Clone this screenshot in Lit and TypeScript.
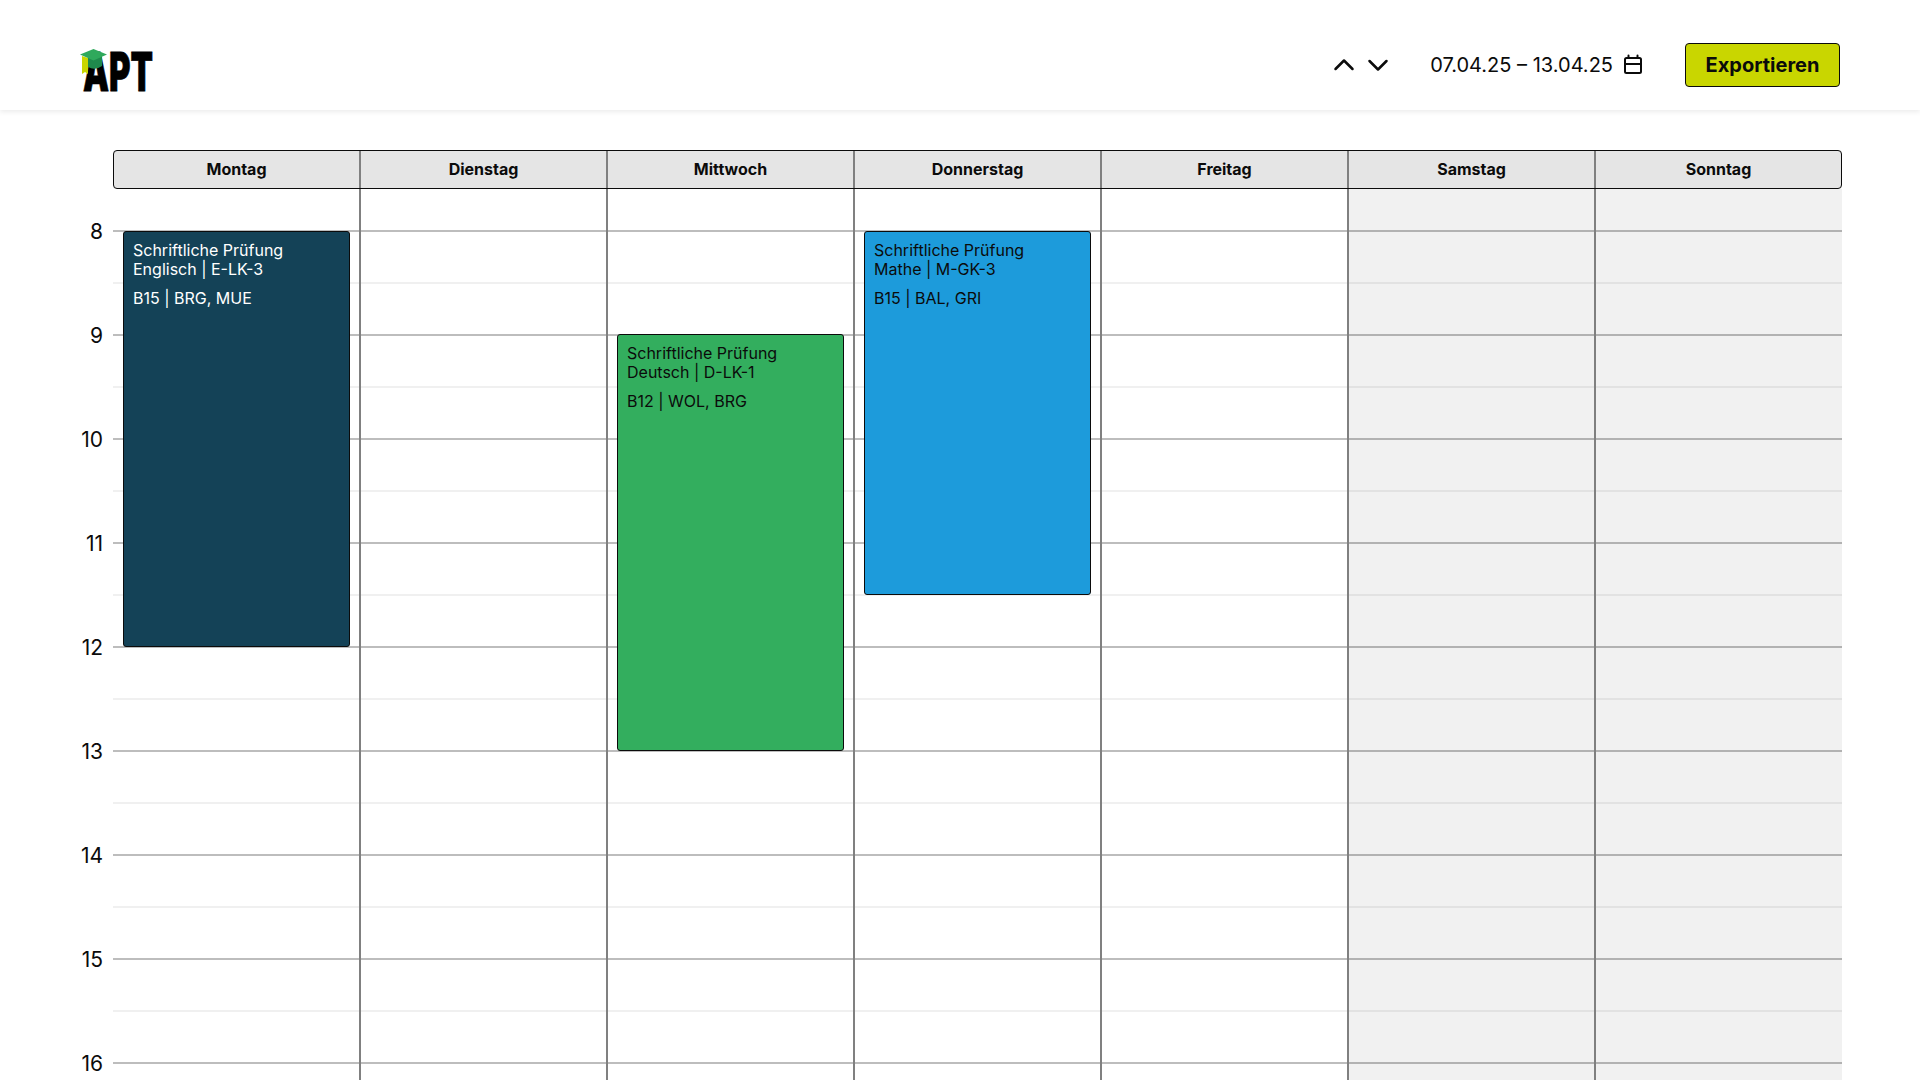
import { LitElement, html, css } from "lit";
import { customElement } from "lit/decorators.js";

const days = ["Montag", "Dienstag", "Mittwoch", "Donnerstag", "Freitag", "Samstag", "Sonntag"];
const hours = [8, 9, 10, 11, 12, 13, 14, 15, 16];

interface Ev { day: number; top: number; height: number; title: string; sub: string; room: string; bg: string; fg: string; }
const events: Ev[] = [
  { day: 0, top: 42, height: 416, title: "Schriftliche Prüfung", sub: "Englisch | E-LK-3", room: "B15 | BRG, MUE", bg: "#144257", fg: "#ffffff" },
  { day: 2, top: 145, height: 417, title: "Schriftliche Prüfung", sub: "Deutsch | D-LK-1", room: "B12 | WOL, BRG", bg: "#33ae5e", fg: "#0b0b0b" },
  { day: 3, top: 42, height: 364, title: "Schriftliche Prüfung", sub: "Mathe | M-GK-3", room: "B15 | BAL, GRI", bg: "#1d9bdb", fg: "#0b0b0b" },
];

@customElement("app-root")
export class AppRoot extends LitElement {
  static styles = css`
    :host { display: block; height: 1080px; overflow: hidden; background: #fff; font-family: Inter, "Liberation Sans", sans-serif; color: #0b0b0b; }
    .top { height: 110px; box-sizing: border-box; display: flex; align-items: center; padding: 20px 80px 0 80px; box-shadow: 0 2px 5px rgba(0,0,0,.08); position: relative; z-index: 2; background: #fff; }
    .logo { display: block; margin-top: 10px; overflow: visible; }
    .logo text { font-family: Inter, "Liberation Sans", sans-serif; font-weight: 900; font-size: 54px; }
    .spacer { flex: 1; }
    .nav { display: flex; gap: 10.5px; margin-right: 40px; }
    .nav svg { display: block; }
    .date { font-size: 20px; margin-right: 8px; }
    .cal { display: block; margin-right: 40px; }
    .btn { box-sizing: border-box; width: 155px; height: 44px; border: 1px solid #0b0b0b; border-radius: 4px; background: #c9d600; font: 700 20px Inter, sans-serif; color: #0b0b0b; padding: 0; }
    .main { padding: 40px 78px 0 0; display: grid; grid-template-columns: 113px 1fr; }
    .heads { grid-column: 2; position: relative; display: grid; grid-template-columns: repeat(7, 1fr); height: 39px; border-radius: 4px; background: #e5e5e5; }
    .heads::after { content: ""; position: absolute; inset: 0; border: 1.5px solid #0b0b0b; border-radius: 4px; }
    .head { position: relative; display: flex; align-items: center; justify-content: center; padding-bottom: 1px; font-size: 16px; font-weight: 700; }
    .head + .head::before, .col + .col::before { content: ""; position: absolute; left: -1px; top: 0; bottom: 0; width: 2px; background: #808080; }
    .gutter { padding-top: 43px; }
    .label { height: 104px; font-size: 21px; text-align: right; padding-right: 10px; line-height: 0; }
    .body { position: relative; padding-top: 41px; }
    .row { height: 104px; box-sizing: border-box; border-top: 2px solid #bdbdbd; position: relative; }
    .row::after { content: ""; position: absolute; left: 0; right: 0; top: 50px; border-top: 2px solid #f0f0f0; }
    .cols { position: absolute; inset: 0; display: grid; grid-template-columns: repeat(7, 1fr); }
    .col { position: relative; }
    .col.we { background: rgba(0,0,0,.055); }
    .ev { position: absolute; left: 10px; right: 10px; box-sizing: border-box; border: 1px solid #0b0b0b; border-radius: 3px; padding: 9px 9px; font-size: 16px; line-height: 19px; }
    .room { margin-top: 10px; }
  `;

  render() {
    return html`
      <div class="top">
        <svg class="logo" width="76" height="46" viewBox="0 0 76 46">
          <text x="3" y="44" textLength="70" lengthAdjust="spacingAndGlyphs" fill="#000" stroke="#000" stroke-width="0.8">APT</text>
          <path d="M8 9 H22 V19 Q15 24 8 20 Z" fill="#1f8a4c"/>
          <path d="M2 9 L8 11 V22 V27 L5 25 L2 27 Z" fill="#c9d600"/>
          <path d="M0 7.5 L13.5 2 L27 7.5 L13.5 13.5 Z" fill="#2fa95c"/>
        </svg>
        <div class="spacer"></div>
        <div class="nav">
          <svg width="24" height="24" viewBox="0 0 24 24" fill="none" stroke="#0b0b0b" stroke-width="2.5" stroke-linecap="round" stroke-linejoin="round"><path d="M3.5 16 L12 7.5 L20.5 16"/></svg>
          <svg width="24" height="24" viewBox="0 0 24 24" fill="none" stroke="#0b0b0b" stroke-width="2.5" stroke-linecap="round" stroke-linejoin="round"><path d="M3.5 8 L12 16.5 L20.5 8"/></svg>
        </div>
        <span class="date">07.04.25 – 13.04.25</span>
        <svg class="cal" width="24" height="24" viewBox="0 0 24 24" fill="none" stroke="#0b0b0b" stroke-width="2" stroke-linecap="round" stroke-linejoin="round"><rect x="4" y="5" width="16" height="15" rx="1.5"/><path d="M4 11 H20 M7.5 2.5 V5 M16.5 2.5 V5"/></svg>
        <button class="btn">Exportieren</button>
      </div>
      <div class="main">
        <div class="heads">${days.map((d) => html`<div class="head">${d}</div>`)}</div>
        <div class="gutter">${hours.map((h) => html`<div class="label">${h}</div>`)}</div>
        <div class="body">
          ${hours.map(() => html`<div class="row"></div>`)}
          <div class="cols">
            ${days.map((_, i) => html`<div class="col ${i >= 5 ? "we" : ""}">
              ${events.filter((e) => e.day === i).map((e) => html`
                <div class="ev" style="top:${e.top}px;height:${e.height}px;background:${e.bg};color:${e.fg}">
                  <div>${e.title}</div><div>${e.sub}</div><div class="room">${e.room}</div>
                </div>`)}
            </div>`)}
          </div>
        </div>
      </div>
    `;
  }
}
